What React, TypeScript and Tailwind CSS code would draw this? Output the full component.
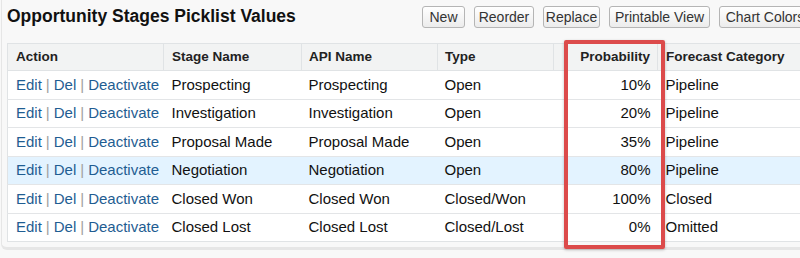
import React from 'react';

type Row = {
  stage: string;
  api: string;
  type: string;
  prob: string;
  forecast: string;
  active?: boolean;
};

const rows: Row[] = [
  { stage: 'Prospecting', api: 'Prospecting', type: 'Open', prob: '10%', forecast: 'Pipeline' },
  { stage: 'Investigation', api: 'Investigation', type: 'Open', prob: '20%', forecast: 'Pipeline' },
  { stage: 'Proposal Made', api: 'Proposal Made', type: 'Open', prob: '35%', forecast: 'Pipeline' },
  { stage: 'Negotiation', api: 'Negotiation', type: 'Open', prob: '80%', forecast: 'Pipeline', active: true },
  { stage: 'Closed Won', api: 'Closed Won', type: 'Closed/Won', prob: '100%', forecast: 'Closed' },
  { stage: 'Closed Lost', api: 'Closed Lost', type: 'Closed/Lost', prob: '0%', forecast: 'Omitted' },
];

// Classic grey picklist button
const Btn: React.FC<{ w: string; children: React.ReactNode }> = ({ w, children }) => (
  <button
    className={`${w} h-[22px] shrink-0 flex items-center justify-center rounded-[3px] border border-[#b5b5b5] bg-gradient-to-b from-white to-[#ececec] text-[14px] text-[#333] leading-none whitespace-nowrap`}
  >
    {children}
  </button>
);

const Sep = () => <span className="text-[#a0a0a0] px-[4px]">|</span>;

export default function App() {
  return (
    <div className="relative w-[800px] h-[258px] overflow-hidden bg-[#f8f8f8] font-['Liberation_Sans',Arial,sans-serif] text-[#111]">
      {/* ── Page block ── */}
      <div className="ml-[1px] w-[840px] pl-[5px] pb-[5px] bg-[#f8f8f8] border-l border-b-[3px] border-[#e6e6e6] rounded-bl-[6px]">
        {/* Title + buttons */}
        <div className="flex items-center h-[33px]">
          <h2 className="w-[415px] shrink-0 text-[17.5px] font-bold text-[#111] leading-none">
            Opportunity Stages Picklist Values
          </h2>
          <div className="flex items-center gap-[9px]">
            <Btn w="w-[43px]">New</Btn>
            <Btn w="w-[60px]">Reorder</Btn>
            <Btn w="w-[57px]">Replace</Btn>
            <Btn w="w-[101px]">Printable View</Btn>
            <Btn w="w-[92px]">Chart Colors</Btn>
          </div>
        </div>

        {/* List table */}
        <table className="mt-[10px] table-fixed border-collapse bg-white border border-[#e0e3e5] w-[834px]">
          <colgroup>
            <col className="w-[156px]" />
            <col className="w-[138px]" />
            <col className="w-[136px]" />
            <col className="w-[116px]" />
            <col className="w-[104px]" />
            <col />
          </colgroup>
          <thead>
            <tr className="h-[27px] bg-[#f2f3f3] border-b border-[#e0e3e5] text-[13.5px] font-bold text-[#222]">
              <th className="text-left px-[8px]">Action</th>
              <th className="text-left px-[8px] border-l border-[#e0e3e5]">Stage Name</th>
              <th className="text-left px-[7px] border-l border-[#e0e3e5]">API Name</th>
              <th className="text-left px-[7px] border-l border-[#e0e3e5]">Type</th>
              <th className="text-right pr-[7px] border-l border-[#e0e3e5]">Probability</th>
              <th className="text-left px-[8px] border-l border-[#e0e3e5]">Forecast Category</th>
            </tr>
          </thead>
          <tbody className="text-[15px]">
            {rows.map((r) => (
              <tr
                key={r.stage}
                className={`h-[28.5px] border-t border-[#e3e5e7] ${r.active ? 'bg-[#e3f3ff]' : 'bg-white'}`}
              >
                <td className="px-[8px] whitespace-nowrap text-[#1f5d92]">
                  Edit<Sep />Del<Sep />Deactivate
                </td>
                <td className="px-[8px] whitespace-nowrap">{r.stage}</td>
                <td className="px-[7px] whitespace-nowrap">{r.api}</td>
                <td className="px-[7px] whitespace-nowrap">{r.type}</td>
                <td className="pr-[7px] text-right whitespace-nowrap">{r.prob}</td>
                <td className="px-[8px] whitespace-nowrap">{r.forecast}</td>
              </tr>
            ))}
          </tbody>
        </table>
      </div>

      {/* Highlight box over Probability column */}
      <div className="absolute left-[564px] top-[40px] w-[101px] h-[209px] border-[4px] border-[#dc4b4b] rounded-[2px] shadow-[0_1px_3px_rgba(0,0,0,0.25)]" />
    </div>
  );
}
